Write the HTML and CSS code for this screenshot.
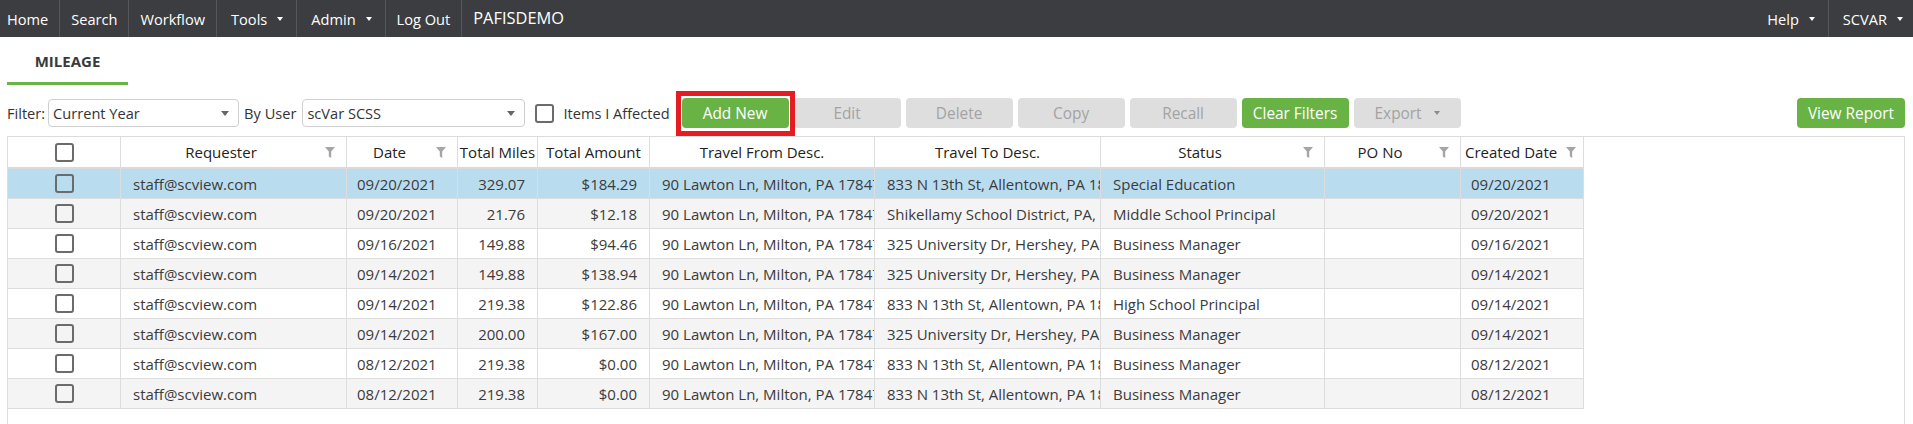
FILE: index.html
```html
<!DOCTYPE html>
<html lang="en">
<head>
<meta charset="utf-8">
<title>Mileage</title>
<link rel="stylesheet" href="styles.css">
</head>
<body>
<nav class="topbar">
  <a class="nav-item first">Home</a>
  <a class="nav-item">Search</a>
  <a class="nav-item">Workflow</a>
  <a class="nav-item dd">Tools<span class="caret"></span></a>
  <a class="nav-item dd">Admin<span class="caret"></span></a>
  <a class="nav-item">Log Out</a>
  <span class="brand">PAFISDEMO</span>
  <a class="nav-item dd help">Help<span class="caret"></span></a>
  <a class="nav-item dd user">SCVAR<span class="caret"></span></a>
</nav>

<main class="page">
  <div class="tabs">
    <div class="tab active">MILEAGE</div>
  </div>

  <div class="toolbar">
    <span class="lbl lbl-filter">Filter:</span>
    <div class="select sel-year"><span class="sel-text">Current Year</span><span class="sel-arrow"></span></div>
    <span class="lbl lbl-user">By User</span>
    <div class="select sel-user"><span class="sel-text">scVar SCSS</span><span class="sel-arrow"></span></div>
    <span class="check check-affected"></span>
    <span class="lbl lbl-affected">Items I Affected</span>
    <div class="btn-group">
      <button class="btn btn-green btn-highlight">Add New</button>
      <button class="btn btn-off">Edit</button>
      <button class="btn btn-off">Delete</button>
      <button class="btn btn-off">Copy</button>
      <button class="btn btn-off">Recall</button>
      <button class="btn btn-green">Clear Filters</button>
      <button class="btn btn-off">Export<span class="caret caret-dark"></span></button>
    </div>
    <button class="btn btn-green btn-report">View Report</button>
  </div>

  <div class="grid">
    <div class="row row-head">
      <div class="cell hc"><span class="check"></span></div>
      <div class="cell hc hf"><span class="hl">Requester</span><svg class="funnel" viewBox="0 0 10 11"><path d="M0 0H10L6.2 4.6V11L3.8 9.6V4.6Z"/></svg></div>
      <div class="cell hc hf"><span class="hl">Date</span><svg class="funnel" viewBox="0 0 10 11"><path d="M0 0H10L6.2 4.6V11L3.8 9.6V4.6Z"/></svg></div>
      <div class="cell hc tight"><span class="hl">Total Miles</span></div>
      <div class="cell hc tight"><span class="hl">Total Amount</span></div>
      <div class="cell hc"><span class="hl">Travel From Desc.</span></div>
      <div class="cell hc"><span class="hl">Travel To Desc.</span></div>
      <div class="cell hc hf"><span class="hl">Status</span><svg class="funnel" viewBox="0 0 10 11"><path d="M0 0H10L6.2 4.6V11L3.8 9.6V4.6Z"/></svg></div>
      <div class="cell hc hf"><span class="hl">PO No</span><svg class="funnel" viewBox="0 0 10 11"><path d="M0 0H10L6.2 4.6V11L3.8 9.6V4.6Z"/></svg></div>
      <div class="cell hc hf hf-tight"><span class="hl">Created Date</span><svg class="funnel" viewBox="0 0 10 11"><path d="M0 0H10L6.2 4.6V11L3.8 9.6V4.6Z"/></svg></div>
    </div>

    <div class="row row-sel">
      <div class="cell cc"><span class="check"></span></div>
      <div class="cell tl">staff@scview.com</div>
      <div class="cell td">09/20/2021</div>
      <div class="cell tr">329.07</div>
      <div class="cell tr">$184.29</div>
      <div class="cell tl">90 Lawton Ln, Milton, PA 17847</div>
      <div class="cell tl">833 N 13th St, Allentown, PA 18102</div>
      <div class="cell tl">Special Education</div>
      <div class="cell tl"></div>
      <div class="cell td">09/20/2021</div>
    </div>
    <div class="row row-alt">
      <div class="cell cc"><span class="check"></span></div>
      <div class="cell tl">staff@scview.com</div>
      <div class="cell td">09/20/2021</div>
      <div class="cell tr">21.76</div>
      <div class="cell tr">$12.18</div>
      <div class="cell tl">90 Lawton Ln, Milton, PA 17847</div>
      <div class="cell tl">Shikellamy School District, PA, 17801</div>
      <div class="cell tl">Middle School Principal</div>
      <div class="cell tl"></div>
      <div class="cell td">09/20/2021</div>
    </div>
    <div class="row">
      <div class="cell cc"><span class="check"></span></div>
      <div class="cell tl">staff@scview.com</div>
      <div class="cell td">09/16/2021</div>
      <div class="cell tr">149.88</div>
      <div class="cell tr">$94.46</div>
      <div class="cell tl">90 Lawton Ln, Milton, PA 17847</div>
      <div class="cell tl">325 University Dr, Hershey, PA 17033</div>
      <div class="cell tl">Business Manager</div>
      <div class="cell tl"></div>
      <div class="cell td">09/16/2021</div>
    </div>
    <div class="row row-alt">
      <div class="cell cc"><span class="check"></span></div>
      <div class="cell tl">staff@scview.com</div>
      <div class="cell td">09/14/2021</div>
      <div class="cell tr">149.88</div>
      <div class="cell tr">$138.94</div>
      <div class="cell tl">90 Lawton Ln, Milton, PA 17847</div>
      <div class="cell tl">325 University Dr, Hershey, PA 17033</div>
      <div class="cell tl">Business Manager</div>
      <div class="cell tl"></div>
      <div class="cell td">09/14/2021</div>
    </div>
    <div class="row">
      <div class="cell cc"><span class="check"></span></div>
      <div class="cell tl">staff@scview.com</div>
      <div class="cell td">09/14/2021</div>
      <div class="cell tr">219.38</div>
      <div class="cell tr">$122.86</div>
      <div class="cell tl">90 Lawton Ln, Milton, PA 17847</div>
      <div class="cell tl">833 N 13th St, Allentown, PA 18102</div>
      <div class="cell tl">High School Principal</div>
      <div class="cell tl"></div>
      <div class="cell td">09/14/2021</div>
    </div>
    <div class="row row-alt">
      <div class="cell cc"><span class="check"></span></div>
      <div class="cell tl">staff@scview.com</div>
      <div class="cell td">09/14/2021</div>
      <div class="cell tr">200.00</div>
      <div class="cell tr">$167.00</div>
      <div class="cell tl">90 Lawton Ln, Milton, PA 17847</div>
      <div class="cell tl">325 University Dr, Hershey, PA 17033</div>
      <div class="cell tl">Business Manager</div>
      <div class="cell tl"></div>
      <div class="cell td">09/14/2021</div>
    </div>
    <div class="row">
      <div class="cell cc"><span class="check"></span></div>
      <div class="cell tl">staff@scview.com</div>
      <div class="cell td">08/12/2021</div>
      <div class="cell tr">219.38</div>
      <div class="cell tr">$0.00</div>
      <div class="cell tl">90 Lawton Ln, Milton, PA 17847</div>
      <div class="cell tl">833 N 13th St, Allentown, PA 18102</div>
      <div class="cell tl">Business Manager</div>
      <div class="cell tl"></div>
      <div class="cell td">08/12/2021</div>
    </div>
    <div class="row row-alt">
      <div class="cell cc"><span class="check"></span></div>
      <div class="cell tl">staff@scview.com</div>
      <div class="cell td">08/12/2021</div>
      <div class="cell tr">219.38</div>
      <div class="cell tr">$0.00</div>
      <div class="cell tl">90 Lawton Ln, Milton, PA 17847</div>
      <div class="cell tl">833 N 13th St, Allentown, PA 18102</div>
      <div class="cell tl">Business Manager</div>
      <div class="cell tl"></div>
      <div class="cell td">08/12/2021</div>
    </div>
  </div>
</main>
</body>
</html>
```

FILE: styles.css
```css
html, body {
  margin: 0;
  padding: 0;
  height: 100%;
  overflow: hidden;
  background: #fff;
}

body {
  font-family: "Open Sans", "Noto Sans", sans-serif;
  color: #333;
  font-size: 14.6px;
}

/* ---------- top navigation ---------- */
.topbar {
  display: flex;
  align-items: stretch;
  height: 37px;
  background: #3c3d40;
  color: #fff;
}

.nav-item {
  display: flex;
  align-items: center;
  padding: 0 11px;
  border-right: 1px solid #55565a;
  color: #fff;
  font-size: 14.6px;
  text-decoration: none;
  white-space: nowrap;
}

.nav-item.first {
  padding-left: 7px;
}

.nav-item.dd {
  padding: 0 13px 0 14px;
}

.caret {
  display: inline-block;
  width: 0;
  height: 0;
  margin-left: 10px;
  border-top: 4px solid #fff;
  border-left: 3.5px solid transparent;
  border-right: 3.5px solid transparent;
}

.brand {
  display: flex;
  align-items: center;
  padding: 0 11px;
  margin-top: -2px;
  flex: 1;
  font-size: 16.4px;
  white-space: nowrap;
}

.nav-item.help {
  border-right: none;
  padding-right: 13px;
}

.nav-item.user {
  border-right: none;
  border-left: 1px solid #55565a;
  padding: 0 10px 0 14px;
}

/* ---------- page ---------- */
.page {
  padding: 0 8px 0 7px;
}

.tabs {
  display: flex;
}

.tab {
  width: 121px;
  box-sizing: border-box;
  text-align: center;
  padding: 14px 0 11px;
  font-weight: 700;
  font-size: 15px;
  color: #3a3a3a;
  border-bottom: 3px solid #6ab344;
}

/* ---------- toolbar ---------- */
.toolbar {
  display: flex;
  align-items: center;
  margin-top: 13px;
  height: 30px;
}

.lbl {
  white-space: nowrap;
  color: #333;
}

.lbl-filter {
  margin-right: 3px;
}

.lbl-user {
  margin: 0 6px 0 5px;
}

.lbl-affected {
  margin-left: 9px;
}

.select {
  display: flex;
  align-items: center;
  height: 28px;
  box-sizing: border-box;
  border: 1px solid #d0d0d0;
  border-radius: 4px;
  padding: 0 9px 0 4px;
  background: #fff;
}

.sel-year {
  width: 191px;
}

.sel-user {
  width: 223px;
}

.sel-text {
  flex: 1;
  white-space: nowrap;
  color: #333;
}

.sel-arrow {
  width: 0;
  height: 0;
  border-top: 5px solid #666;
  border-left: 4px solid transparent;
  border-right: 4px solid transparent;
}

.check {
  display: inline-block;
  width: 19px;
  height: 19px;
  box-sizing: border-box;
  border: 2px solid #6b6b6b;
  border-radius: 3px;
}

.check-affected {
  margin-left: 10px;
}

.btn-group {
  display: flex;
  gap: 5px;
  margin-left: 12px;
}

.btn {
  display: flex;
  align-items: center;
  justify-content: center;
  width: 107px;
  height: 30px;
  padding: 0;
  border: none;
  border-radius: 4px;
  font-family: "Open Sans", "Noto Sans", sans-serif;
  font-size: 15.4px;
  white-space: nowrap;
}

.btn-green {
  background: #69b345;
  color: #fff;
}

.btn-off {
  background: #dedede;
  color: #a3a3a3;
}

.caret-dark {
  border-top-color: #8a8a8a;
  margin-left: 12px;
}

.btn-highlight {
  position: relative;
}

.btn-highlight::after {
  content: "";
  position: absolute;
  left: -6px;
  right: -6px;
  top: -7px;
  bottom: -8px;
  border: 5px solid #e41d25;
}

.btn-report {
  margin-left: auto;
  width: 108px;
}

/* ---------- grid ---------- */
.grid {
  margin-top: 8px;
  height: 290px;
  box-sizing: border-box;
  border: 1px solid #dcdcdc;
  border-bottom: none;
  overflow: hidden;
}

.row {
  display: grid;
  grid-template-columns: 113px 226px 111px 80px 112px 225px 226px 224px 136px 123px;
  width: 1576px;
  height: 30px;
  background: #fff;
}

.row-alt {
  background: #f4f4f4;
}

.row-sel {
  background: #b9ddef;
}

.row-head {
  height: 32px;
  background: #fff;
}

.cell {
  display: flex;
  align-items: center;
  box-sizing: border-box;
  border-right: 1px solid #dddddd;
  border-bottom: 1px solid #dddddd;
  overflow: hidden;
  white-space: nowrap;
  font-size: 15px;
  color: #3b3b3b;
}

.row-head .cell {
  border-bottom: 2px solid #dadada;
  justify-content: center;
  color: #222;
}

.hl {
  white-space: nowrap;
}

.hf .hl {
  flex: 1;
  text-align: center;
  overflow: hidden;
}

.hf-tight .hl {
  text-align: left;
  padding-left: 4px;
}

.tight {
  padding: 0;
}

.funnel {
  flex: none;
  width: 10px;
  height: 11px;
  margin: 0 11px 0 4px;
  fill: #a5a5a5;
}

.hf-tight .funnel {
  margin-right: 7px;
}

.cc {
  justify-content: center;
}

.tl {
  padding-left: 12px;
}

.td {
  padding-left: 10px;
}

.tr {
  justify-content: flex-end;
  padding-right: 12px;
}
```
